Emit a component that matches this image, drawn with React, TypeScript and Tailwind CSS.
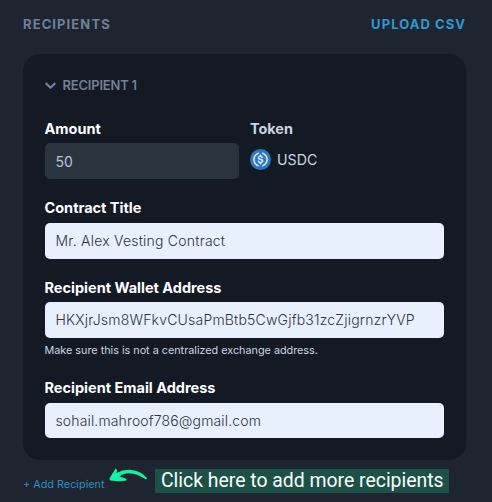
import type { ReactNode } from "react";

const inputBase = "flex items-center rounded-[5px] px-[10.5px] text-[14px] leading-5";

function Field({ label, value, className, box }: { label: string; value: string; className: string; box: string }) {
  return (
    <label className={`block ${className}`}>
      <Label>{label}</Label>
      <span className={`${inputBase} bg-[#e8f0fe] font-light text-[#2c3542] ${box}`}>{value}</span>
    </label>
  );
}

function Label({ children }: { children: ReactNode }) {
  return <span className="-ml-[0.5px] block text-[14.5px] leading-5 font-bold whitespace-nowrap text-white">{children}</span>;
}

function UsdcIcon() {
  return (
    <svg className="size-[21px] shrink-0" viewBox="0 0 32 32">
      <circle cx="16" cy="16" r="16" fill="#2f76c5" />
      <g fill="#e6f1fc" stroke="#e6f1fc" strokeWidth=".5">
        <path d="M20.022 18.124c0-2.124-1.28-2.852-3.84-3.156-1.828-.243-2.193-.728-2.193-1.578 0-.85.61-1.396 1.828-1.396 1.097 0 1.707.364 2.011 1.275a.458.458 0 00.427.303h.975a.416.416 0 00.427-.425v-.06a3.04 3.04 0 00-2.743-2.489V9.142c0-.243-.183-.425-.487-.486h-.915c-.243 0-.426.182-.487.486v1.396c-1.829.242-2.986 1.456-2.986 2.974 0 2.002 1.218 2.791 3.778 3.095 1.707.303 2.255.668 2.255 1.639 0 .97-.853 1.638-2.011 1.638-1.585 0-2.133-.667-2.316-1.578-.06-.242-.244-.364-.427-.364h-1.036a.416.416 0 00-.426.425v.06c.243 1.518 1.219 2.61 3.23 2.914v1.457c0 .242.183.425.487.485h.915c.243 0 .426-.182.487-.485V21.34c1.829-.303 3.047-1.578 3.047-3.217z" />
        <path d="M12.892 24.497c-4.754-1.7-7.192-6.98-5.424-11.653.914-2.55 2.925-4.491 5.424-5.402.244-.121.365-.303.365-.607v-.85c0-.242-.121-.424-.365-.485-.061 0-.183 0-.244.06a10.895 10.895 0 00-7.13 13.717c1.096 3.4 3.717 6.01 7.13 7.102.244.121.488 0 .548-.243.061-.06.061-.122.061-.243v-.85c0-.182-.182-.424-.365-.546zm6.46-18.936c-.244-.122-.488 0-.548.242-.061.061-.061.122-.061.243v.85c0 .243.182.485.365.607 4.754 1.7 7.192 6.98 5.424 11.653-.914 2.55-2.925 4.491-5.424 5.402-.244.121-.365.303-.365.607v.85c0 .242.121.424.365.485.061 0 .183 0 .244-.06a10.895 10.895 0 007.13-13.717c-1.096-3.46-3.778-6.07-7.13-7.162z" />
      </g>
    </svg>
  );
}

export default function App() {
  return (
    <main className="h-[502px] w-[492px] overflow-hidden bg-[#1e2530] pr-[26px] pl-[23px] pt-[14px] font-[Inter,sans-serif]">
      <header className="flex h-5 items-center justify-between pt-px text-[13px] font-bold">
        <h1 className="tracking-[1.1px] text-[#718096]">RECIPIENTS</h1>
        <button className="tracking-[1.05px] text-[#2a9bd0]">UPLOAD CSV</button>
      </header>

      <section className="mt-5 h-[406px] rounded-[17px] bg-[#141a24] px-[22px] pt-[22px]">
        <div className="flex h-5 items-center">
          <svg className="-mt-px w-[11px]" viewBox="0 0 11 8" fill="none">
            <path d="M1.4 1.7 5.5 5.7l4.1-4" stroke="#718096" strokeWidth="2.3" strokeLinecap="round" strokeLinejoin="round" />
          </svg>
          <h2 className="ml-[6.5px] text-[13px] font-semibold tracking-[-0.2px] text-[#718096]">RECIPIENT 1</h2>
        </div>

        <div className="mt-[23px] flex">
          <label className="block w-[194px]">
            <Label>Amount</Label>
            <span className={`${inputBase} mt-1 h-9 bg-[#2a343f] pt-0.5 text-[#b8c4d8]`}>50</span>
          </label>
          <div className="ml-[11px]">
            <span className="block text-[14.4px] leading-5 font-bold text-[#cbd5e1]">Token</span>
            <div className="mt-[10px] flex h-[21px] items-center gap-[6px] text-[14.2px] text-[#cbd5e1]">
              <UsdcIcon />
              USDC
            </div>
          </div>
        </div>

        <Field className="mt-[19px] w-[399px]" label="Contract Title" value="Mr. Alex Vesting Contract" box="mt-[5px] h-9 tracking-[0.22px]" />
        <Field className="mt-[19px] w-[399px]" label="Recipient Wallet Address" value="HKXjrJsm8WFkvCUsaPmBtb5CwGjfb31zcZjigrnzrYVP" box="mt-1 h-9 tracking-[0.2px]" />
        <p className="mt-[5px] -ml-[0.5px] text-[10.8px] leading-4 text-[#cbd5e1]">Make sure this is not a centralized exchange address.</p>
        <Field className="mt-[19px] w-[399px]" label="Recipient Email Address" value="sohail.mahroof786@gmail.com" box="mt-[5px] h-[35px] tracking-[0.14px]" />
      </section>

      <footer className="flex pt-2">
        <button className="mt-2 h-4 w-[86px] text-left text-[10.85px] leading-4 whitespace-nowrap text-[#2a8fc4]">+ Add Recipient</button>
        <svg className="h-[15px] w-[38px]" viewBox="0 0 38 15">
          <path d="M6.5 0.7Q8 .5 8 2.2L7.5 5Q14 1.5 21 1.8Q31 2.2 37.5 9.5Q38.5 11.6 36.6 11.2Q28 5.3 20 5.2Q14 5.2 10.5 8.4L16.8 10.5Q18.3 11.6 16.6 12.7Q9 13.7 1.5 12.5Q0 12 .7 9.9Z" fill="#0df5a5" />
        </svg>
        <p className="ml-2 mt-[1px] h-6 w-[294px] bg-[#1c5147] pl-[6px] font-[Roboto,sans-serif] text-[19.4px] leading-6 whitespace-nowrap text-white">Click here to add more recipients</p>
      </footer>
    </main>
  );
}
